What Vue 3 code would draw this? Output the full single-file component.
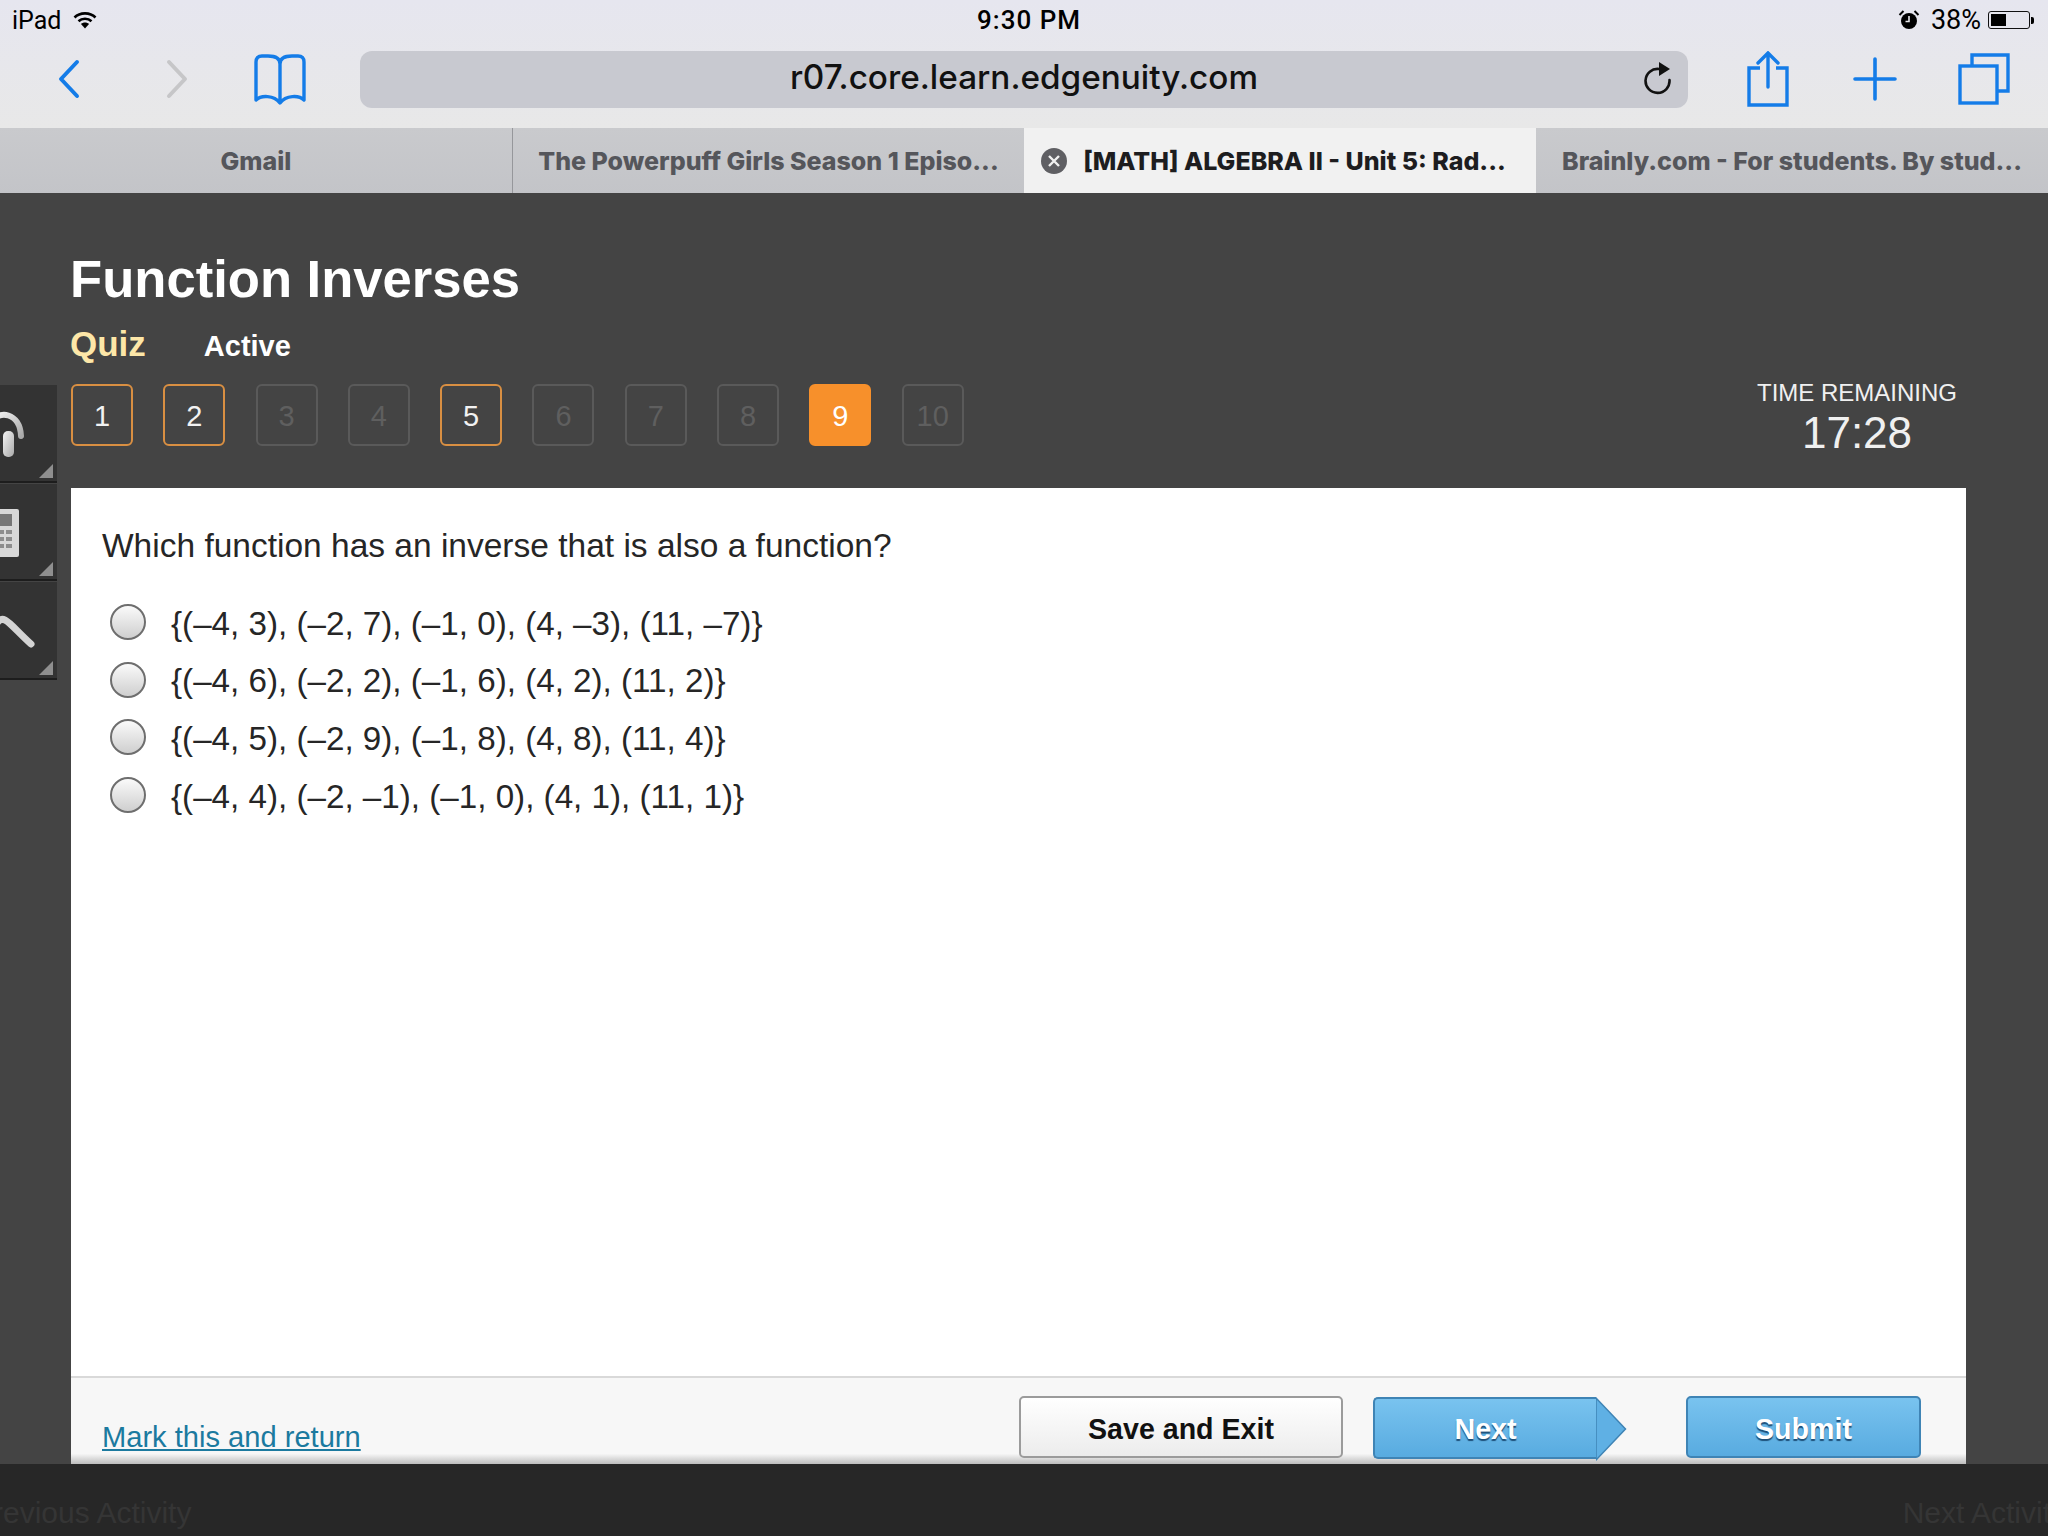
<template>
  <div class="screen">
    <header class="browser">
      <div class="status">
        <div class="status-left">
          <span>iPad</span>
          <svg width="24" height="18" viewBox="0 0 24 18">
            <path d="M1.5 6.5C7 1 17 1 22.5 6.5" fill="none" stroke="#000" stroke-width="2.6" />
            <path d="M5.5 10.2C9 7 15 7 18.5 10.2" fill="none" stroke="#000" stroke-width="2.6" />
            <path d="M8 13 12 17.5 16 13C14 11 10 11 8 13Z" fill="#000" />
          </svg>
        </div>
        <div class="clock">9:30 PM</div>
        <div class="status-right">
          <svg width="22" height="22" viewBox="0 0 22 22">
            <circle cx="11" cy="12" r="8" fill="#000" />
            <path d="M11 7v5.5H7.5" fill="none" stroke="#e8e8ec" stroke-width="1.6" />
            <path d="M1.5 6 5.5 2M20.5 6 16.5 2" stroke="#000" stroke-width="2" />
          </svg>
          <span class="percent">38%</span>
          <div class="battery"><div class="battery-level"></div></div>
          <div class="battery-tip"></div>
        </div>
      </div>

      <div class="toolbar">
        <div class="nav-icons">
          <svg width="22" height="40" viewBox="0 0 22 40">
            <path d="M19 3 3 20l16 17" fill="none" stroke="#147ce8" stroke-width="4" stroke-linecap="round" stroke-linejoin="round" />
          </svg>
          <svg width="22" height="40" viewBox="0 0 22 40">
            <path d="M3 3l16 17L3 37" fill="none" stroke="#c6c6c8" stroke-width="4" stroke-linecap="round" stroke-linejoin="round" />
          </svg>
          <svg class="book" width="54" height="52" viewBox="0 0 54 52">
            <path d="M27 10C27 4 22 2 15 2H9C5 2 3 4 3 8V46C8 41 21 41 27 49 33 41 46 41 51 46V8C51 4 49 2 45 2H39C32 2 27 4 27 10V47" fill="none" stroke="#147ce8" stroke-width="3.4" stroke-linejoin="round" stroke-linecap="round" />
          </svg>
        </div>
        <div class="address">
          <span class="url">r07.core.learn.edgenuity.com</span>
          <svg class="reload" width="30" height="34" viewBox="0 0 30 34">
            <path d="M25.5 18A12 12 0 1 1 15 7" fill="none" stroke="#111" stroke-width="2.6" stroke-linecap="round" />
            <path d="M15 0l11 7-11 7Z" fill="#111" />
          </svg>
        </div>
        <div class="action-icons">
          <svg width="42" height="56" viewBox="0 0 42 56">
            <path d="M13 17H2V54H40V17H29" fill="none" stroke="#147ce8" stroke-width="3.4" />
            <path d="M21 36V3M11 12 21 2 31 12" fill="none" stroke="#147ce8" stroke-width="3.4" stroke-linecap="round" />
          </svg>
          <svg width="44" height="44" viewBox="0 0 44 44">
            <path d="M22 2V42M2 22H42" fill="none" stroke="#147ce8" stroke-width="3.6" stroke-linecap="round" />
          </svg>
          <svg width="52" height="52" viewBox="0 0 52 52">
            <path d="M14 12V2H50V38H39" fill="none" stroke="#147ce8" stroke-width="3.4" />
            <rect x="2" y="13" width="37" height="37" fill="none" stroke="#147ce8" stroke-width="3.4" />
          </svg>
        </div>
      </div>

      <div class="tabs">
        <div v-for="tab in tabs" :key="tab.title" class="tab" :class="{ active: tab.active }">
          <span v-if="tab.active" class="tab-close">
            <svg width="26" height="26" viewBox="0 0 26 26">
              <circle cx="13" cy="13" r="13" fill="#5f5f63" />
              <path d="M8 8l10 10M18 8 8 18" stroke="#f0f0f0" stroke-width="2.4" />
            </svg>
          </span>
          {{ tab.title }}
        </div>
      </div>
    </header>

    <main class="page">
      <section class="heading">
        <h1>Function Inverses</h1>
        <div class="subtitle">
          <span class="quiz">Quiz</span>
          <span class="state">Active</span>
        </div>
      </section>

      <section class="workspace">
        <aside class="dock">
          <div class="dock-item">
            <svg width="30" height="62" viewBox="0 0 30 62">
              <defs>
                <linearGradient id="metal" x1="0" y1="0" x2="1" y2="1">
                  <stop offset="0" stop-color="#f4f4f4" />
                  <stop offset="1" stop-color="#a9a9a9" />
                </linearGradient>
              </defs>
              <path d="M-8 20C-2 8 20 10 21 34" fill="none" stroke="url(#metal)" stroke-width="6" stroke-linecap="round" />
              <rect x="3" y="29" width="11" height="26" rx="5" fill="url(#metal)" />
            </svg>
          </div>
          <div class="dock-item">
            <svg width="30" height="62" viewBox="0 0 30 62">
              <rect x="-14" y="8" width="33" height="48" rx="2" fill="#d8d8d8" />
              <rect x="-10" y="13" width="22" height="12" fill="#777" />
              <path d="M-10 31H14M-10 38H14M-10 45H14" stroke="#8d8d8d" stroke-width="4" stroke-dasharray="6 2" />
            </svg>
          </div>
          <div class="dock-item">
            <svg width="36" height="62" viewBox="0 0 36 62">
              <path d="M-3 24C4 14 10 26 31 45" fill="none" stroke="#d4d4d4" stroke-width="7" stroke-linecap="round" />
            </svg>
          </div>
        </aside>

        <div class="content">
          <div class="progress">
            <div class="steps">
              <div v-for="step in steps" :key="step.label" class="step" :class="step.state">{{ step.label }}</div>
            </div>
            <div class="timer">
              <div class="timer-label">TIME REMAINING</div>
              <div class="timer-value">17:28</div>
            </div>
          </div>

          <article class="card">
            <div class="question">
              <p class="prompt">Which function has an inverse that is also a function?</p>
              <label v-for="option in options" :key="option" class="option">
                <span class="radio"></span>
                <span>{{ option }}</span>
              </label>
            </div>
            <footer class="card-footer">
              <a class="mark" href="#">Mark this and return</a>
              <div class="buttons">
                <button class="btn btn-light">Save and Exit</button>
                <div class="next">
                  <button class="btn btn-blue btn-next">Next</button>
                  <svg width="31" height="64" viewBox="0 0 31 64">
                    <path d="M0 1 29.5 32 0 63Z" fill="#5fb0e4" stroke="#3f84b5" stroke-width="1.5" />
                  </svg>
                </div>
                <button class="btn btn-blue btn-submit">Submit</button>
              </div>
            </footer>
          </article>
        </div>
      </section>
    </main>

    <footer class="activity-bar">
      <span class="prev">Previous Activity</span>
      <span class="nxt">Next Activity</span>
    </footer>
  </div>
</template>

<script setup>
const tabs = [
  { title: "Gmail" },
  { title: "The Powerpuff Girls Season 1 Episo..." },
  { title: "[MATH] ALGEBRA II - Unit 5: Rad...", active: true },
  { title: "Brainly.com - For students. By stud..." },
];

const steps = [
  { label: "1", state: "done" },
  { label: "2", state: "done" },
  { label: "3", state: "off" },
  { label: "4", state: "off" },
  { label: "5", state: "done" },
  { label: "6", state: "off" },
  { label: "7", state: "off" },
  { label: "8", state: "off" },
  { label: "9", state: "current" },
  { label: "10", state: "off" },
];

const options = [
  "{(–4, 3), (–2, 7), (–1, 0), (4, –3), (11, –7)}",
  "{(–4, 6), (–2, 2), (–1, 6), (4, 2), (11, 2)}",
  "{(–4, 5), (–2, 9), (–1, 8), (4, 8), (11, 4)}",
  "{(–4, 4), (–2, –1), (–1, 0), (4, 1), (11, 1)}",
];
</script>

<style>
html,
body {
  margin: 0;
  background: #444;
}
</style>

<style scoped>
.screen {
  width: 2048px;
  height: 1536px;
  overflow: hidden;
  display: flex;
  flex-direction: column;
  font-family: "Liberation Sans", Arial, sans-serif;
  background: #444;
}

.browser {
  background: linear-gradient(#e6e6ef, #e8e8e8 128px);
  font-family: Inter, Roboto, sans-serif;
}

.status {
  height: 40px;
  padding: 0 14px 0 12px;
  display: flex;
  align-items: center;
  justify-content: space-between;
  font-family: Roboto, sans-serif;
  font-size: 25px;
  color: #000;
  position: relative;
}

.status-left {
  display: flex;
  align-items: center;
  gap: 12px;
}

.clock {
  position: absolute;
  left: 977px;
  font-size: 26px;
  font-weight: 500;
  letter-spacing: 1px;
}

.status-right {
  display: flex;
  align-items: center;
}

.percent {
  margin-left: 11px;
  margin-right: 7px;
  font-size: 27px;
}

.battery {
  width: 42px;
  height: 18px;
  border: 1.5px solid #111;
  border-radius: 3px;
  padding: 2px;
  box-sizing: border-box;
}

.battery-level {
  width: 15px;
  height: 100%;
  background: #000;
}

.battery-tip {
  width: 3px;
  height: 7px;
  margin-left: 1px;
  background: #000;
  border-radius: 0 2px 2px 0;
}

.toolbar {
  height: 88px;
  display: flex;
  align-items: center;
  box-sizing: border-box;
  padding-bottom: 10px;
}

.nav-icons {
  width: 360px;
  display: flex;
  align-items: center;
  box-sizing: border-box;
  padding-left: 58px;
}

.nav-icons svg:nth-child(2) {
  margin-left: 86px;
}

.book {
  margin-left: 65px;
  margin-top: 2px;
}

.address {
  width: 1328px;
  height: 57px;
  background: #c8c9d0;
  border-radius: 12px;
  display: flex;
  align-items: center;
  justify-content: center;
  position: relative;
}

.url {
  font-size: 33.3px;
  font-weight: 500;
  color: #111;
  margin-top: -4px;
}

.reload {
  position: absolute;
  right: 14px;
  top: 11px;
}

.action-icons {
  display: flex;
  align-items: center;
  margin-left: 59px;
}

.action-icons svg:nth-child(2) {
  margin-left: 64px;
}

.action-icons svg:nth-child(3) {
  margin-left: 61px;
}

.tabs {
  height: 65px;
  display: grid;
  grid-template-columns: repeat(4, 1fr);
  font-size: 25px;
  font-weight: 800;
  color: #55565b;
}

.tab {
  background: linear-gradient(#c9cacd, #c3c4c8);
  display: flex;
  align-items: center;
  justify-content: center;
  white-space: nowrap;
  border-left: 1px solid #96979b;
  box-sizing: border-box;
}

.tab:first-child,
.tab.active,
.tab.active + .tab {
  border-left: 0;
}

.tab.active {
  background: #f1f1f1;
  color: #1d1d1f;
  padding-right: 13px;
}

.tab-close {
  display: flex;
  margin-right: 16px;
}

.page {
  flex: 1;
  min-height: 0;
  display: flex;
  flex-direction: column;
  background: #444;
}

.heading {
  padding: 54px 0 0 70px;
  height: 137px;
  box-sizing: border-box;
  color: #fff;
}

h1 {
  margin: 0;
  font-size: 52.6px;
  line-height: 64px;
  font-weight: 700;
}

.subtitle {
  display: flex;
  align-items: baseline;
  margin-top: 13px;
}

.quiz {
  font-size: 35px;
  font-weight: 700;
  color: #fde7a8;
}

.state {
  margin-left: 58px;
  font-size: 29px;
  font-weight: 700;
}

.workspace {
  flex: 1;
  min-height: 0;
  padding-top: 54px;
  display: flex;
}

.dock {
  width: 57px;
  height: 296px;
  flex: none;
  display: flex;
  flex-direction: column;
  background: #333;
}

.dock-item {
  flex: 1;
  position: relative;
  overflow: hidden;
  display: flex;
  align-items: center;
  border-bottom: 2px solid #1d1d1d;
  border-top: 1px solid #444;
}

.dock-item::after {
  content: "";
  position: absolute;
  right: 4px;
  bottom: 3px;
  border-style: solid;
  border-width: 0 0 14px 14px;
  border-color: transparent transparent #8f8f8f transparent;
}

.content {
  margin-left: 14px;
  width: 1895px;
  display: flex;
  flex-direction: column;
}

.progress {
  height: 104px;
  display: flex;
  justify-content: space-between;
  flex: none;
}

.steps {
  display: flex;
  gap: 30.3px;
}

.step {
  width: 62px;
  height: 62px;
  box-sizing: border-box;
  border-radius: 6px;
  display: flex;
  align-items: center;
  justify-content: center;
  padding-top: 2px;
  font-size: 29px;
  border: 2px solid #5a5a5a;
  color: #5f5f5f;
}

.step.done {
  border-color: #d98f42;
  color: #f2f2f2;
}

.step.current {
  background: #f7902b;
  border-color: #f7902b;
  color: #fff;
}

.timer {
  color: #f0f0f0;
  text-align: center;
  margin-right: 9px;
  margin-top: -6px;
}

.timer-label {
  font-size: 24px;
  line-height: 30px;
}

.timer-value {
  font-size: 44px;
  line-height: 50px;
}

.card {
  flex: 1;
  min-height: 0;
  background: #fff;
  display: flex;
  flex-direction: column;
}

.question {
  flex: 1;
  padding: 38px 31px 0;
  color: #262626;
}

.prompt {
  margin: 0 0 29px;
  font-size: 33.5px;
  line-height: 40px;
}

.option {
  display: flex;
  align-items: center;
  height: 57.6px;
  font-size: 33.2px;
  padding-left: 8px;
}

.radio {
  width: 36px;
  height: 36px;
  box-sizing: border-box;
  border-radius: 50%;
  border: 2px solid #6e6e6e;
  background: linear-gradient(#fafafa, #cfcfcf);
  margin-right: 25px;
  margin-top: -3px;
  flex: none;
}

.card-footer {
  height: 88px;
  box-sizing: border-box;
  border-top: 2px solid #d9d9d9;
  background: linear-gradient(#f7f7f7 88%, #bdbdbd);
  padding: 0 45px 0 31px;
  display: flex;
  align-items: flex-end;
  justify-content: space-between;
}

.mark {
  font-size: 29.1px;
  line-height: 36px;
  color: #1b7a9f;
  text-decoration: underline;
  margin-bottom: 9px;
}

.buttons {
  display: flex;
  align-items: flex-start;
  align-self: flex-start;
  margin-top: 18px;
}

.btn {
  height: 62px;
  box-sizing: border-box;
  border-radius: 5px;
  font-family: inherit;
  font-size: 28.6px;
  font-weight: 700;
  padding: 5px 0 0;
  cursor: pointer;
}

.btn-light {
  width: 324px;
  background: linear-gradient(#fff, #ececec);
  border: 2px solid #9b9b9b;
  color: #111;
}

.btn-blue {
  background: linear-gradient(#79c3ef, #58abe0);
  border: 2px solid #3f84b5;
  color: #fff;
  text-shadow: 0 2px 1px #1d4f78;
}

.next {
  display: flex;
  margin-left: 30px;
  margin-top: 1px;
}

.btn-next {
  width: 223px;
  border-radius: 5px 0 0 5px;
  border-right: 0;
  padding-top: 3px;
}

.btn-submit {
  width: 235px;
  margin-left: 59px;
}

.activity-bar {
  height: 72px;
  flex: none;
  background: #272727;
  display: flex;
  align-items: center;
  justify-content: space-between;
  font-size: 30px;
  color: #353535;
  white-space: nowrap;
  overflow: hidden;
  box-sizing: border-box;
  padding-top: 25px;
}

.prev {
  margin-left: -27px;
}

.nxt {
  margin-right: -18px;
}
</style>
